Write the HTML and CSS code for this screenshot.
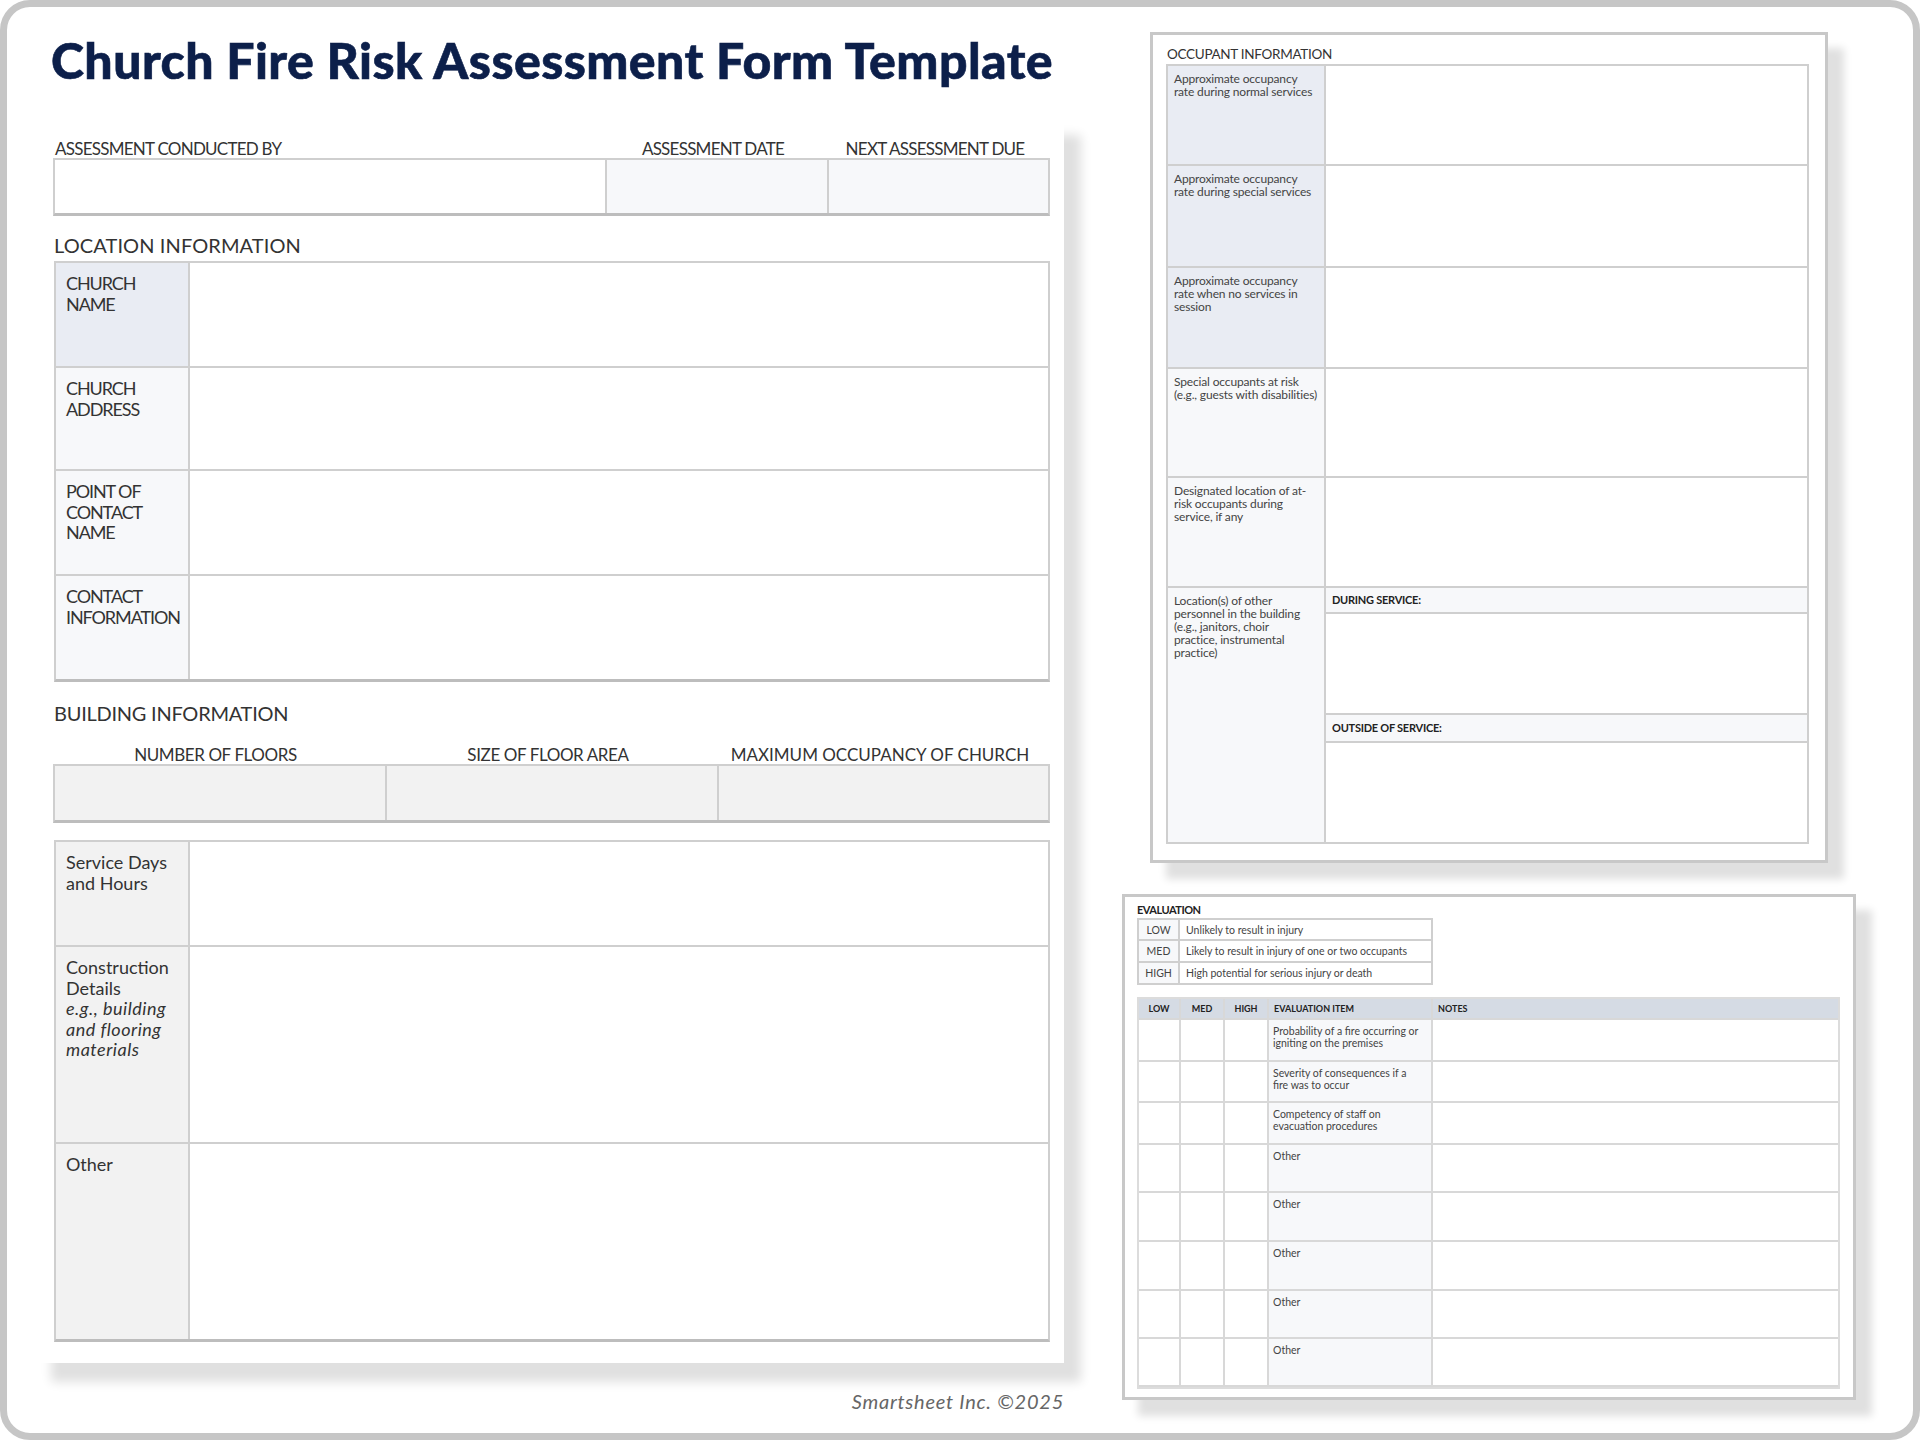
FILE: index.html
```html
<!DOCTYPE html>
<html lang="en">
<head>
<meta charset="utf-8">
<title>Church Fire Risk Assessment Form Template</title>
<link rel="stylesheet" href="styles.css">
</head>
<body>
<div class="frame">
  <main class="left">
    <h1 class="title">Church Fire Risk Assessment Form Template</h1>
    <section class="sheet">
      <div class="labels cols-a">
        <span class="lab tight">ASSESSMENT CONDUCTED BY</span>
        <span class="lab center tight">ASSESSMENT DATE</span>
        <span class="lab center tight">NEXT ASSESSMENT DUE</span>
      </div>
      <div class="grid strip strip-a">
        <div class="cell"></div>
        <div class="cell tint"></div>
        <div class="cell tint last"></div>
      </div>

      <h2 class="heading">LOCATION INFORMATION</h2>
      <div class="grid form loc">
        <div class="cell label caps blue">CHURCH<br>NAME</div><div class="cell last"></div>
        <div class="cell label caps tint">CHURCH<br>ADDRESS</div><div class="cell last"></div>
        <div class="cell label caps tint">POINT OF<br>CONTACT<br>NAME</div><div class="cell last"></div>
        <div class="cell label caps tint end">CONTACT<br>INFORMATION</div><div class="cell last end"></div>
      </div>

      <h2 class="heading second">BUILDING INFORMATION</h2>
      <div class="labels cols-b spaced">
        <span class="lab center snug">NUMBER OF FLOORS</span>
        <span class="lab center snug">SIZE OF FLOOR AREA</span>
        <span class="lab center">MAXIMUM OCCUPANCY OF CHURCH</span>
      </div>
      <div class="grid strip strip-b">
        <div class="cell grey"></div>
        <div class="cell grey"></div>
        <div class="cell grey last"></div>
      </div>

      <div class="grid form bld">
        <div class="cell label grey">Service Days<br>and Hours</div><div class="cell last"></div>
        <div class="cell label grey">Construction<br>Details<br><em>e.g., building<br>and flooring<br>materials</em></div><div class="cell last"></div>
        <div class="cell label grey end">Other</div><div class="cell last end"></div>
      </div>
    </section>
    <p class="credit">Smartsheet Inc. ©2025</p>
  </main>

  <aside class="right">
    <section class="doc occ">
      <h3 class="doc-title">OCCUPANT INFORMATION</h3>
      <div class="grid occ-table">
        <div class="cell small blue">Approximate occupancy<br>rate during normal services</div><div class="cell last"></div>
        <div class="cell small blue">Approximate occupancy<br>rate during special services</div><div class="cell last"></div>
        <div class="cell small blue">Approximate occupancy<br>rate when no services in<br>session</div><div class="cell last"></div>
        <div class="cell small tint">Special occupants at risk<br>(e.g., guests with disabilities)</div><div class="cell last"></div>
        <div class="cell small tint">Designated location of at-<br>risk occupants during<br>service, if any</div><div class="cell last"></div>
        <div class="cell small tint end">Location(s) of other<br>personnel in the building<br>(e.g., janitors, choir<br>practice, instrumental<br>practice)</div>
        <div class="sub">
          <div class="cell last tint strong">DURING SERVICE:</div>
          <div class="cell last"></div>
          <div class="cell last tint strong lower">OUTSIDE OF SERVICE:</div>
          <div class="cell last end"></div>
        </div>
      </div>
    </section>

    <section class="doc eval">
      <h3 class="eval-title">EVALUATION</h3>
      <div class="grid key">
        <div class="cell tint mid">LOW</div><div class="cell last desc">Unlikely to result in injury</div>
        <div class="cell tint mid">MED</div><div class="cell last desc">Likely to result in injury of one or two occupants</div>
        <div class="cell tint mid end">HIGH</div><div class="cell last end desc">High potential for serious injury or death</div>
      </div>
      <div class="grid items">
        <div class="cell head mid">LOW</div><div class="cell head mid">MED</div><div class="cell head mid">HIGH</div><div class="cell head">EVALUATION ITEM</div><div class="cell head last">NOTES</div>

        <div class="cell"></div><div class="cell"></div><div class="cell"></div><div class="cell tint item">Probability of a fire occurring or<br>igniting on the premises</div><div class="cell last"></div>
        <div class="cell"></div><div class="cell"></div><div class="cell"></div><div class="cell tint item">Severity of consequences if a<br>fire was to occur</div><div class="cell last"></div>
        <div class="cell"></div><div class="cell"></div><div class="cell"></div><div class="cell tint item">Competency of staff on<br>evacuation procedures</div><div class="cell last"></div>
        <div class="cell"></div><div class="cell"></div><div class="cell"></div><div class="cell tint item">Other</div><div class="cell last"></div>
        <div class="cell"></div><div class="cell"></div><div class="cell"></div><div class="cell tint item">Other</div><div class="cell last"></div>
        <div class="cell"></div><div class="cell"></div><div class="cell"></div><div class="cell tint item">Other</div><div class="cell last"></div>
        <div class="cell"></div><div class="cell"></div><div class="cell"></div><div class="cell tint item">Other</div><div class="cell last"></div>
        <div class="cell"></div><div class="cell"></div><div class="cell"></div><div class="cell tint item">Other</div><div class="cell last"></div>
      </div>
    </section>
  </aside>
</div>
</body>
</html>
```

FILE: styles.css
```css
* { box-sizing: border-box; }
html, body { margin: 0; padding: 0; background: #fff; }
body { font-family: "Lato", "Liberation Sans", sans-serif; color: #333; }

.frame {
  width: 1920px;
  height: 1440px;
  border: 7px solid #c6c6c6;
  border-radius: 30px;
  background: #fff;
  padding: 25px 0 0 27px;
  display: flex;
  overflow: hidden;
}

/* Left sheet */
.left { width: 1030px; flex: none; }
.title {
  margin: 0 0 28px 17px;
  height: 56px;
  line-height: 56px;
  font-size: 50px;
  font-weight: 900;
  letter-spacing: 0.42px;
  -webkit-text-stroke: 0.6px #0c1f4a;
  color: #0c1f4a;
  white-space: nowrap;
}
.sheet {
  background: #fff;
  padding: 24px 14px 21px 19px;
  box-shadow: 17px 19px 10px #e0e0e0;
}
.labels { display: grid; height: 18px; }
.spaced { margin-top: 21px; }
.lab { font-size: 17px; line-height: 18px; color: #333; white-space: nowrap; padding-left: 2px; }
.lab.center { text-align: center; padding: 0 8px 0 0; }
.tight { letter-spacing: -0.75px; }
.snug { letter-spacing: -0.4px; }
.cols-a { grid-template-columns: 553px 222px 222px; }
.cols-b { grid-template-columns: 333px 332px 332px; }

.heading {
  margin: 17px 0 4px 1px;
  height: 24px;
  font-size: 20px;
  font-weight: 400;
  line-height: 24px;
  color: #333;
  letter-spacing: 0.1px;
}
.heading.second { margin: 19px 0 0 1px; letter-spacing: -0.25px; }

/* Generic bordered grids */
.grid {
  display: grid;
  border: 2px solid #cfcfcf;
  background: #fff;
}
.cell {
  border-right: 2px solid #cfcfcf;
  border-bottom: 2px solid #cfcfcf;
  min-width: 0;
}
.cell.last { border-right: 0; }
.cell.end { border-bottom: 0; }
.tint { background: #f7f8fa; }
.blue { background: #e9ecf3; }
.grey { background: #f2f2f2; }

.strip { grid-template-rows: 1fr; border-bottom: 3px solid #bdbdbd; }
.strip .cell { border-bottom: 0; }
.strip-a { height: 58px; grid-template-columns: 552px 222px 1fr; }
.strip-b { height: 59px; grid-template-columns: 332px 332px 1fr; }

.form { margin-left: 1px; grid-template-columns: 134px 1fr; border-bottom: 3px solid #bdbdbd; }
.loc { grid-template-rows: 105px 103px 105px 103px; }
.bld { margin-top: 17px; grid-template-rows: 105px 197px 195px; }
.label { padding: 10px 4px 0 10px; font-size: 18px; line-height: 20.5px; color: #333; white-space: nowrap; }
.caps { letter-spacing: -1.1px; }
.label em { letter-spacing: 0.5px; }

.credit {
  margin: 26px 0 0;
  height: 24px;
  line-height: 24px;
  font-size: 20px;
  font-style: italic;
  letter-spacing: 0.75px;
  text-align: right;
  color: #666;
}

/* Right documents */
.right { margin-left: 58px; width: 734px; flex: none; }
.doc {
  border: 3px solid #c8c8c8;
  background: #fff;
  box-shadow: 16px 16px 8px #e0e0e0;
}
.occ { width: 678px; margin-left: 28px; padding: 12px 0 16px 13px; }
.doc-title {
  margin: 0 0 3px 1px;
  height: 14px;
  font-size: 13.5px;
  line-height: 14px;
  font-weight: 400;
  color: #333;
  white-space: nowrap;
  letter-spacing: -0.3px;
}
.occ-table {
  width: 643px;
  grid-template-columns: 158px 1fr;
  grid-template-rows: 100px 102px 101px 109px 110px 254px;
}
.small { padding: 6px 2px 0 6px; font-size: 12px; line-height: 13px; color: #444; white-space: nowrap; letter-spacing: -0.15px; }
.sub { display: grid; grid-template-rows: 26px 101px 28px 99px; }
.strong { padding: 5px 0 0 6px; font-size: 11px; line-height: 13px; font-weight: 700; color: #222; letter-spacing: -0.25px; }
.strong.lower { padding-top: 6px; }

.eval { margin-top: 31px; padding: 7px 0 10px 12px; height: 506px; }
.eval-title { margin: 0 0 2px; height: 12px; font-size: 11px; line-height: 12px; font-weight: 700; color: #222; letter-spacing: -0.5px; }
.key {
  width: 296px;
  grid-template-columns: 41px 1fr;
  grid-template-rows: 21px 22px 20px;
}
.mid { text-align: center; font-size: 10.5px; line-height: 20px; color: #444; }
.desc { padding-left: 6px; font-size: 10.5px; line-height: 20px; color: #444; white-space: nowrap; }

.items {
  margin-top: 12px;
  width: 703px;
  grid-template-columns: 42px 44px 44px 164px 1fr;
  grid-template-rows: 21px 42px 41px 42px 48px 49px 49px 48px 48px;
  border-color: #dcdcdc;
}
.items .cell { border-color: #d8d8d8; }
.head {
  background: #d5dbe4;
  padding-left: 5px;
  font-size: 9px;
  line-height: 20px;
  font-weight: 700;
  color: #222;
}
.head.mid { padding-left: 0; font-size: 9px; color: #222; }
.item { padding: 5px 2px 0 4px; font-size: 10.5px; line-height: 12.3px; color: #444; white-space: nowrap; }
```
